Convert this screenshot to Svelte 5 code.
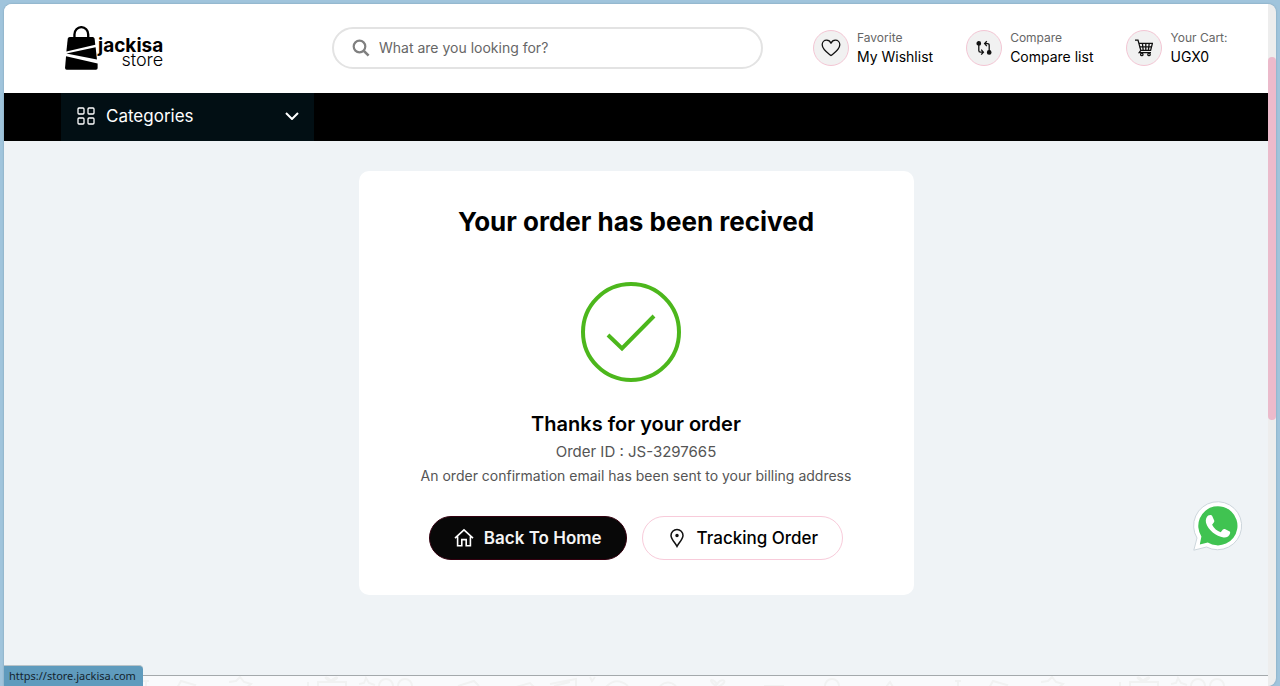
<script lang="ts">
    const orderId = "JS-3297665"
    const storeUrl = "https://store.jackisa.com"

    const actions = [
        { icon: "heart", label: "Favorite", value: "My Wishlist" },
        { icon: "compare", label: "Compare", value: "Compare list" },
        { icon: "cart", label: "Your Cart:", value: "UGX0" },
    ]

    let search = $state("")
</script>

<div class="window">
    <div class="site">
        <header class="header">
            <a class="logo" href={storeUrl} aria-label="jackisa store">
                <svg width="33" height="44" viewBox="0 0 98 131">
                    <path d="M28 36V25a20 21 0 0 1 41 0V36" fill="none" stroke="#000" stroke-width="7" />
                    <path d="M14 33H82q5 0 6 5L90 56 4 76 8 38q1-5 6-5z" />
                    <path d="M4 82 91 63 95 100z" />
                    <path d="M3 90 97 112V125q0 5-5 5H5q-5 0-5-5z" />
                </svg>
                <span class="logo-text">
                    <strong>jackisa</strong>
                    <span>store</span>
                </span>
            </a>

            <label class="search">
                <svg width="18" height="18" viewBox="0 0 18 18" fill="none" stroke="#808080">
                    <circle cx="7.5" cy="7.5" r="5.8" stroke-width="2.2" />
                    <path d="M11.8 11.8 16.6 16.6" stroke-width="2.6" />
                </svg>
                <input type="text" placeholder="What are you looking for?" aria-label="Search" bind:value={search} />
            </label>

            <nav class="actions">
                {#each actions as action}
                    <a class="action" href={storeUrl}>
                        <span class="circle">
                            {#if action.icon === "heart"}
                                <svg width="20" height="18" viewBox="0 0 20 18" fill="none" stroke="#111" stroke-width="1.3" stroke-linejoin="round">
                                    <path d="M10 16.6C7.5 14.6 1.2 10.6 1.2 5.8 1.2 3 3.2 1.2 5.6 1.2 7.6 1.2 9.2 2.4 10 4.2 10.8 2.4 12.4 1.2 14.4 1.2 16.8 1.2 18.8 3 18.8 5.8 18.8 10.6 12.5 14.6 10 16.6z" />
                                </svg>
                            {:else if action.icon === "compare"}
                                <svg width="16" height="16" viewBox="0 0 16 16" fill="none" stroke="#111" stroke-width="1.3">
                                    <circle cx="2.8" cy="3.4" r="1.7" fill="#111" />
                                    <circle cx="13.2" cy="12.4" r="1.7" fill="#111" />
                                    <path d="M2.8 4V10.6q0 1.6 1.6 1.6H7M5.2 9.6 7.4 12.2 5.2 14.6" />
                                    <path d="M13.2 12V5.2q0-1.6-1.6-1.6H9M10.8 1.2 8.6 3.6 10.8 6.2" />
                                </svg>
                            {:else}
                                <svg width="18" height="18" viewBox="0 0 18 18" fill="none" stroke="#111" stroke-width="1.3">
                                    <path d="M0 1.2H3L5.8 11.4H15.6L17.4 4.4H4M5.8 11.4 4.2 13.6H16" />
                                    <path d="M4.6 7.8H16.6M7.4 4.4 8.2 11.4M10.8 4.4V11.4M14.2 4.4 13.4 11.4" />
                                    <circle cx="6.8" cy="15.4" r="1.2" />
                                    <circle cx="14" cy="15.4" r="1.2" />
                                </svg>
                            {/if}
                        </span>
                        <span class="action-text">
                            <small>{action.label}</small>
                            <span>{action.value}</span>
                        </span>
                    </a>
                {/each}
            </nav>
        </header>

        <div class="bar">
            <button class="categories">
                <svg width="18" height="18" viewBox="0 0 18 18" fill="none" stroke="#fff" stroke-width="1.3">
                    <rect x="1" y="1" width="6" height="6" rx="1" />
                    <rect x="11" y="1" width="6" height="6" rx="1" />
                    <rect x="1" y="11" width="6" height="6" rx="1" />
                    <rect x="11" y="11" width="6" height="6" rx="1" />
                </svg>
                <span>Categories</span>
                <svg class="chevron" width="14" height="8" viewBox="0 0 14 8" fill="none" stroke="#fff" stroke-width="2">
                    <path d="M1 1 7 7 13 1" />
                </svg>
            </button>
        </div>

        <main class="main">
            <section class="card">
                <h1>Your order has been recived</h1>
                <svg class="check" width="100" height="100" viewBox="0 0 100 100" fill="none" stroke="#4cb71c" stroke-width="4">
                    <circle cx="50" cy="50" r="48" />
                    <path d="M27 53 41 66.5 73 34" />
                </svg>
                <h2>Thanks for your order</h2>
                <p class="order-id">Order ID : {orderId}</p>
                <p class="note">An order confirmation email has been sent to your billing address</p>
                <div class="buttons">
                    <a class="btn dark" href={storeUrl}>
                        <svg width="20" height="20" viewBox="0 0 20 20" fill="none" stroke="#fff" stroke-width="1.6">
                            <path d="M1 10.2 10 1.8 19 10.2M3.6 8.4V17.8H7.8V11.6H12.2V17.8H16.4V8.4" />
                        </svg>
                        Back To Home
                    </a>
                    <a class="btn" href={storeUrl}>
                        <svg width="20" height="20" viewBox="0 0 20 20" fill="none" stroke="#111" stroke-width="1.5">
                            <path d="M10 18.4C8.4 15.2 4 11 4 7.4A6 6 0 0 1 16 7.4C16 11 11.6 15.2 10 18.4z" />
                            <circle cx="10" cy="7.4" r="1" fill="#111" />
                        </svg>
                        Tracking Order
                    </a>
                </div>
            </section>
        </main>

        <footer class="footer">
            <svg width="100%" height="10" fill="none" stroke="#f1f2f2" stroke-width="2">
                <defs>
                    <pattern id="doodles" width="812" height="10" patternUnits="userSpaceOnUse">
                        <path d="M173 12 177 5 191 9 187 14M225 6 232 5 236 1 240 6 247 8 242 12" />
                        <path d="M304 6V12M314 12V6H342V12M327 5C318 2 322-1 327 5 332-1 338 2 327 5" />
                        <path d="M355 8 360 7 362 2 365 7 371 9" />
                        <circle cx="382" cy="10" r="7" />
                        <circle cx="401" cy="10" r="7" />
                        <path d="M454 10 470 5 475 10M512 11 526 7 530 11M546 8 572 3V10M550 10 566 6M586 1 588 5 591 1" />
                        <path d="M602 11Q612 0 624 10M656 10Q664 3 672 10" />
                        <path d="M713 11C700 1 712 3 713 9 715 1 728 4 714 11M760 10H780M812 11Q820 6 824 11" />
                        <circle cx="28" cy="10" r="7" transform="translate(800 0)" />
                        <circle cx="16" cy="10" r="7" />
                        <path d="M70 11 74 6 77 11M139 5H145M142 5V12" />
                    </pattern>
                </defs>
                <rect width="100%" height="10" fill="url(#doodles)" stroke="none" />
            </svg>
        </footer>

        <a class="whatsapp" href="https://wa.me" aria-label="WhatsApp">
            <svg width="50" height="50" viewBox="0 0 50 50">
                <path d="M.8 49.2 4 37A24 24 0 1 1 13.5 46z" fill="#fff" stroke="#cdd6dc" stroke-width="1" />
                <path d="M6.8 43.4 8.4 35.4A19.6 19.6 0 1 1 14.8 41.6z" fill="#40c351" />
                <path d="M15.2 14.6c1.3-.8 3.4-.8 4 .4l2 4.6c.3.8 0 1.5-.6 2.2l-1.5 1.9c1.9 3.7 4.9 6.2 8.6 7.6l2.2-2.7c.6-.7 1.2-.8 2-.5l4.3 2.1c.9.4 1.1 1 .9 2-.6 3.1-3.6 4.5-6.5 4.2-7.4-1-15.6-7.4-17.6-14.7-.7-2.8.4-5.6 2.2-7.1z" fill="#fff" />
            </svg>
        </a>
        <span class="status">{storeUrl}</span>
    </div>
    <div class="scrollbar"><div class="thumb"></div></div>
</div>

<style>
    :global(body) {
        display: flow-root;
        background: #a0c4dc;
    }

    .window {
        min-height: calc(100vh - 4px);
        margin: 4px 4px 0;
        display: flex;
        border-radius: 8px 8px 8px 0;
        overflow: hidden;
        box-shadow: 0 0 2px #7898ac;
        font-family: Inter, sans-serif;
        color: #000;
    }

    a {
        color: inherit;
        text-decoration: none;
    }

    svg {
        flex-shrink: 0;
    }

    .site {
        position: relative;
        flex: 1;
        min-width: 0;
        display: flex;
        flex-direction: column;
        background: #eff3f6;
    }

    .scrollbar {
        width: 8px;
        background: #ededed;
        display: grid;
        grid-template-rows: 53fr 363fr 266fr;
    }

    .thumb {
        grid-row: 2;
        border-radius: 4px;
        background: #ecbacb;
    }

    .header {
        height: 89px;
        box-sizing: border-box;
        padding: 0 40px 2px 61px;
        display: flex;
        align-items: center;
        background: #fff;
    }

    .logo {
        width: 267px;
        display: flex;
        align-items: center;
    }

    .logo-text {
        display: flex;
        flex-direction: column;
        align-items: flex-end;
        font-size: 18px;
        line-height: 14px;
        padding-top: 10px;
    }

    .logo-text strong {
        font-size: 19px;
    }

    .logo-text span {
        font-weight: 300;
    }

    .search {
        flex: 0 1 431px;
        height: 42px;
        box-sizing: border-box;
        margin-right: 50px;
        padding: 0 18px;
        display: flex;
        align-items: center;
        gap: 9px;
        border: 2px solid #e3e3e3;
        border-radius: 21px;
    }

    .search input {
        flex: 1;
        min-width: 0;
        padding: 0;
        border: 0;
        outline: 0;
        background: none;
        font: 14px Inter, sans-serif;
    }

    .search input::placeholder {
        color: #666;
    }

    .actions {
        display: flex;
        gap: 33px;
    }

    .action {
        display: flex;
        align-items: center;
        gap: 8px;
        white-space: nowrap;
    }

    .circle {
        width: 36px;
        height: 36px;
        box-sizing: border-box;
        display: grid;
        place-items: center;
        border: 1px solid #f3c6d4;
        border-radius: 50%;
        background: #f1f1f1;
    }

    .action-text {
        display: flex;
        flex-direction: column;
        padding-bottom: 2px;
        font-size: 14px;
        line-height: 19px;
    }

    .action-text small {
        font-size: 12px;
        color: #666;
    }

    .bar {
        height: 48px;
        padding-left: 57px;
        background: #000;
    }

    .categories {
        width: 253px;
        height: 48px;
        padding: 0 15px 2px 16px;
        display: flex;
        align-items: center;
        gap: 11px;
        border: 0;
        background: #020f14;
        color: #fff;
        font: 17px Inter, sans-serif;
    }

    .chevron {
        margin-left: auto;
    }

    .main {
        padding: 30px 16px 80px;
    }

    .card {
        max-width: 555px;
        box-sizing: border-box;
        margin: 0 auto;
        padding: 34px 24px 35px;
        display: flex;
        flex-direction: column;
        align-items: center;
        border-radius: 10px;
        background: #fff;
        text-align: center;
    }

    h1,
    h2,
    p {
        margin: 0;
    }

    h1 {
        font-size: 26px;
        font-weight: 700;
        line-height: 34px;
    }

    .check {
        margin: 43px 10px 30px 0;
    }

    h2 {
        margin-bottom: 4px;
        font-size: 20px;
        font-weight: 600;
        line-height: 24px;
    }

    p {
        line-height: 24px;
        color: #555;
    }

    .order-id {
        font-size: 15px;
    }

    .note {
        font-size: 14px;
    }

    .buttons {
        margin-top: 28px;
        display: flex;
        gap: 15px;
    }

    .btn {
        height: 44px;
        box-sizing: border-box;
        padding: 0 24px;
        display: flex;
        align-items: center;
        gap: 10px;
        border: 1px solid #f8cbda;
        border-radius: 22px;
        font-size: 17px;
        font-weight: 500;
        white-space: nowrap;
    }

    .btn.dark {
        border-color: #33000f;
        background: #080808;
        color: #f4f4f4;
        font-weight: 600;
    }

    .footer {
        flex: 1;
        border-top: 1px solid #a4a9ac;
        background: #f9fafc;
    }

    .footer svg {
        display: block;
    }

    .whatsapp {
        position: absolute;
        right: 25px;
        bottom: 135px;
        height: 50px;
    }

    .status {
        position: absolute;
        left: 0;
        bottom: 0;
        padding: 0 7px 0 5px;
        border-top: 1px solid #b9c3c8;
        border-top-right-radius: 4px;
        background: #5f9bbd;
        color: #14242e;
        font: 11px/20px "Noto Sans", sans-serif;
    }
</style>
